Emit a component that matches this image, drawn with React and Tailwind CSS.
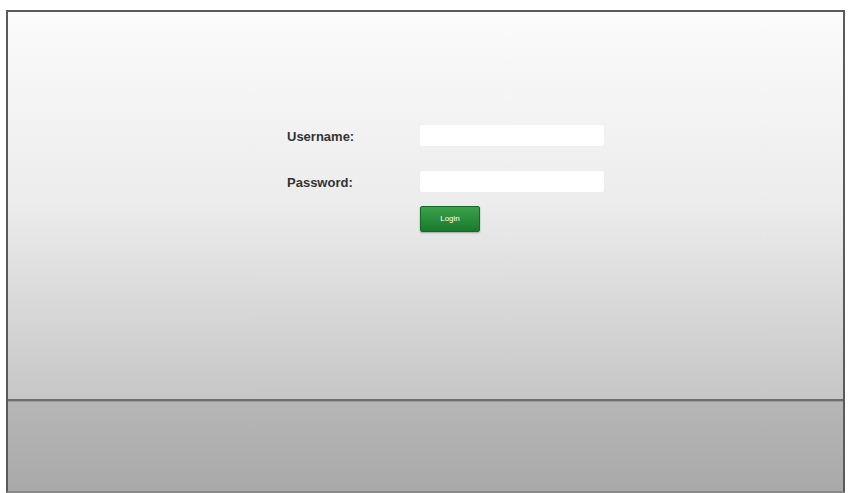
export default function App() {
  return (
    <div className="w-[848px] h-[493px] bg-white pt-[10px] pl-[6px] pr-[3px] font-['Liberation_Sans',Arial,sans-serif] overflow-hidden">
      <div className="h-[483px] flex flex-col border-2 border-[#5a5a5a] border-b-[#8a8a8a]">
        {/* Main login area */}
        <div className="h-[387px] bg-gradient-to-b from-[#fbfbfb] via-[#ececec] to-[#c6c6c6] pt-[113px] pl-[279px]">
          <div className="flex flex-col">
            <div className="flex items-center h-[21px]">
              <label className="w-[133px] text-[13px] font-bold text-[#333] pt-[2px]">Username:</label>
              <input className="w-[184px] h-[21px] bg-white rounded-[2px] outline-none shadow-[0_0_1px_rgba(0,0,0,0.05)]" />
            </div>
            <div className="flex items-center h-[21px] mt-[25px]">
              <label className="w-[133px] text-[13px] font-bold text-[#333] pt-[2px]">Password:</label>
              <input type="password" className="w-[184px] h-[21px] bg-white rounded-[2px] outline-none shadow-[0_0_1px_rgba(0,0,0,0.05)]" />
            </div>
            <div className="ml-[133px] mt-[12px]">
              <button className="w-[60px] h-[26px] rounded-[2px] bg-gradient-to-b from-[#3aa14a] to-[#187a2c] border border-[#16672a] text-white text-[8px] shadow-[0_1px_2px_rgba(0,0,0,0.3)]">
                Login
              </button>
            </div>
          </div>
        </div>
        {/* Divider */}
        <div className="h-[3px] bg-[#6e6e6e] border-b border-[#9a9a9a]" />
        {/* Footer */}
        <div className="flex-1 bg-gradient-to-b from-[#b6b6b6] to-[#a9a9a9]" />
      </div>
    </div>
  );
}
